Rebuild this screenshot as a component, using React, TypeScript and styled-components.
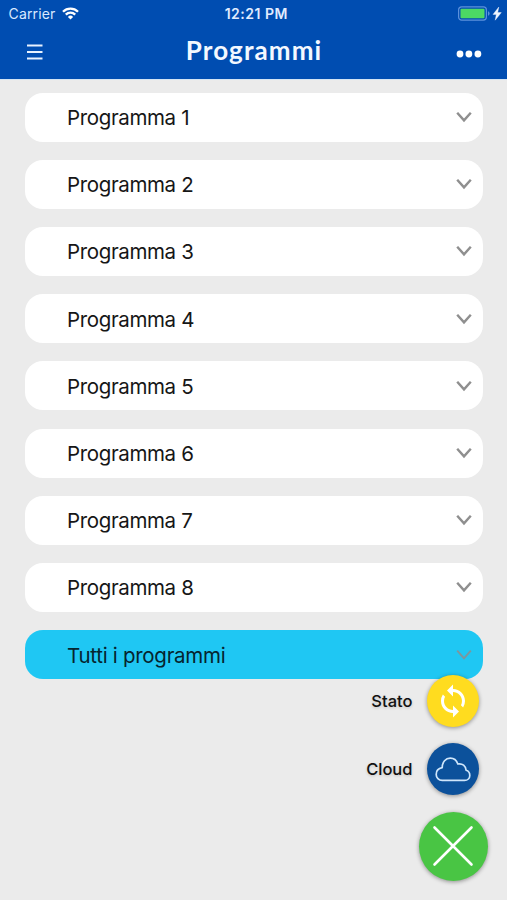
import React from "react";
import styled, { createGlobalStyle } from "styled-components";

const GlobalStyle = createGlobalStyle`
  * { box-sizing: border-box; }
  html, body { margin: 0; padding: 0; }
  body { background: #ebebeb; overflow: hidden; }
`;

const Screen = styled.div`
  width: 507px;
  height: 900px;
  position: relative;
  display: flex;
  flex-direction: column;
  background: #ebebeb;
  font-family: Inter, "Liberation Sans", sans-serif;
  color: #111;
`;

const Header = styled.header`
  height: 79px;
  flex: none;
  background: #004db1;
  box-shadow: 0 1px 0 #d3e4f4;
  color: #fff;
`;

const StatusBar = styled.div`
  height: 27px;
  display: grid;
  grid-template-columns: 1fr auto 1fr;
  align-items: center;
  padding: 0 5px 0 8.5px;
`;

const Carrier = styled.div`
  display: flex;
  align-items: center;
  gap: 7px;
  font-size: 14px;
  letter-spacing: 0.15px;
  color: #d9e9ff;
`;

const Clock = styled.div`
  font-size: 14px;
  font-weight: 600;
  letter-spacing: 0.5px;
  padding-left: 2px;
  color: #e0ecff;
`;

const Power = styled.div`
  display: flex;
  justify-content: flex-end;
`;

const NavBar = styled.div`
  height: 52px;
  display: grid;
  grid-template-columns: 60px 1fr 60px;
  align-items: center;
  padding: 0 12px;
`;

const NavButton = styled.button<{ $end?: boolean }>`
  border: 0;
  background: none;
  color: inherit;
  display: flex;
  justify-content: ${(p) => (p.$end ? "flex-end" : "flex-start")};
  padding: ${(p) => (p.$end ? "2px 13px 0 0" : "0 0 2px 14px")};
`;

const Title = styled.h1`
  margin: 0;
  padding: 0 0 6px 1px;
  text-align: center;
  font: 700 26px/34px Lato, sans-serif;
  letter-spacing: 1.1px;
  color: #f3f8ff;
`;

const List = styled.main`
  display: flex;
  flex-direction: column;
  gap: 18.2px;
  padding: 13.6px 24.5px 0 25px;
`;

const Row = styled.div<{ $active?: boolean }>`
  height: 49px;
  border-radius: 18px;
  background: ${(p) => (p.$active ? "#1fc7f3" : "#fff")};
  color: ${(p) => (p.$active ? "#06242e" : "#161616")};
  display: flex;
  align-items: center;
  justify-content: space-between;
  padding: 0 10px 0 42px;
  font-size: 20.5px;
`;

const RowLabel = styled.span<{ $active?: boolean }>`
  padding-top: 1px;
  letter-spacing: ${(p) => (p.$active ? "-0.28px" : "-0.36px")};
`;

const Actions = styled.div`
  position: absolute;
  right: 19.5px;
  bottom: 19.5px;
  display: flex;
  flex-direction: column;
  align-items: flex-end;
`;

const Action = styled.div`
  display: flex;
  align-items: center;
  gap: 14.5px;
  margin: 0 8.5px 16.5px 0;
`;

const ActionLabel = styled.span`
  font-size: 16.5px;
  font-weight: 500;
  text-shadow: 0 1px 3px rgba(0, 0, 0, 0.18);
`;

const RoundButton = styled.button<{ $size: number; $color: string }>`
  width: ${(p) => p.$size}px;
  height: ${(p) => p.$size}px;
  border: 0;
  padding: 0;
  border-radius: 50%;
  background: ${(p) => p.$color};
  display: flex;
  align-items: center;
  justify-content: center;
  box-shadow: 0 1px 4px rgba(0, 0, 0, 0.4);
`;

const WifiIcon = () => (
  <svg width="17" height="13" viewBox="0 0 17 13" fill="none" stroke="#fff" strokeWidth="2.3">
    <path d="M1 4.7a10.6 10.6 0 0 1 15 0" />
    <path d="M3.8 7.6a6.6 6.6 0 0 1 9.4 0" />
    <path d="M8.5 12.4 5.9 9.9a3.7 3.7 0 0 1 5.2 0z" fill="#fff" stroke="none" />
  </svg>
);

const BatteryIcon = () => (
  <svg width="44" height="15" viewBox="0 0 44 15">
    <rect x="0.6" y="0.9" width="27.8" height="13.2" rx="3" fill="none" stroke="#5c91dc" strokeWidth="1.2" />
    <rect x="2.5" y="2.8" width="24" height="9.4" rx="1" fill="#4cd964" />
    <path d="M30 5.2q1.6.5 1.6 2.3T30 9.8z" fill="#5c91dc" />
    <path d="M40.800 1 35 8.400h3.300L37.200 14.200 43.300 6.600h-3.600z" fill="#f0f6ff" stroke="#f0f6ff" strokeWidth="0.4" />
  </svg>
);

const MenuIcon = () => (
  <svg width="18" height="18" viewBox="0 0 18 18" stroke="#e8f2ff" strokeWidth="2">
    <path d="M1 2.500h15.500M1 9h15.500M1 15.500h15.500" />
  </svg>
);

const MoreIcon = () => (
  <svg width="26" height="8" viewBox="0 0 26 8" fill="#fff">
    <circle cx="4" cy="4" r="3.400" />
    <circle cx="12.900" cy="4" r="3.400" />
    <circle cx="21.900" cy="4" r="3.400" />
  </svg>
);

const ChevronIcon = ({ muted }: { muted?: boolean }) => (
  <svg
    width="17"
    height="12"
    viewBox="0 0 17 12"
    fill="none"
    stroke={muted ? "#7f969c" : "#8f8f8f"}
    strokeWidth={muted ? 1.9 : 2.4}
  >
    <path d="M1.200 1.700 8 9.400l6.800-7.700" />
  </svg>
);

const SyncIcon = () => (
  <svg width="36" height="36" viewBox="0 0 24 24" fill="#fff">
    <path d="M12 4V1L8 5l4 4V6c3.310 0 6 2.690 6 6 0 1.010-.25 1.970-.7 2.800l1.460 1.460A7.930 7.930 0 0 0 20 12c0-4.420-3.580-8-8-8zm0 14c-3.310 0-6-2.690-6-6 0-1.010.25-1.970.7-2.800L5.240 7.740A7.930 7.930 0 0 0 4 12c0 4.420 3.580 8 8 8v3l4-4-4-4v3z" />
  </svg>
);

const CloudIcon = () => (
  <svg width="36" height="26" viewBox="0 0 36 26" fill="none" stroke="#cfe6fb" strokeWidth="1.700" strokeLinejoin="round">
    <path d="M7.200 24.400C3.700 24.400 1.200 21.700 1.200 18.400c0-3.400 2.300-6.100 6-6.700C7.300 5.900 10.600 2.100 15.300 2.100c3.400 0 6.200 2 7.500 5.900 4.700-.8 8 1.900 8.300 6.300 2.300.7 3.700 2.700 3.700 5.100 0 2.900-2.200 5-5.200 5z" />
  </svg>
);

const CloseIcon = () => (
  <svg width="42" height="42" viewBox="0 0 42 42" stroke="#fff" strokeWidth="2.600" strokeLinecap="round">
    <path d="M2.500 2.500l37 37M39.500 2.500l-37 37" />
  </svg>
);

const programs = [1, 2, 3, 4, 5, 6, 7, 8];

export default function App() {
  return (
    <Screen>
      <GlobalStyle />
      <Header>
        <StatusBar>
          <Carrier>
            Carrier
            <WifiIcon />
          </Carrier>
          <Clock>12:21 PM</Clock>
          <Power>
            <BatteryIcon />
          </Power>
        </StatusBar>
        <NavBar>
          <NavButton aria-label="Menu">
            <MenuIcon />
          </NavButton>
          <Title>Programmi</Title>
          <NavButton $end aria-label="Altro">
            <MoreIcon />
          </NavButton>
        </NavBar>
      </Header>
      <List>
        {programs.map((n) => (
          <Row key={n}>
            <RowLabel>Programma {n}</RowLabel>
            <ChevronIcon />
          </Row>
        ))}
        <Row $active>
          <RowLabel $active>Tutti i programmi</RowLabel>
          <ChevronIcon muted />
        </Row>
      </List>
      <Actions>
        <Action>
          <ActionLabel>Stato</ActionLabel>
          <RoundButton $size={52} $color="#ffdc1f" aria-label="Stato">
            <SyncIcon />
          </RoundButton>
        </Action>
        <Action>
          <ActionLabel>Cloud</ActionLabel>
          <RoundButton $size={52} $color="#0c519b" aria-label="Cloud">
            <CloudIcon />
          </RoundButton>
        </Action>
        <RoundButton $size={69} $color="#49c544" aria-label="Chiudi">
          <CloseIcon />
        </RoundButton>
      </Actions>
    </Screen>
  );
}
